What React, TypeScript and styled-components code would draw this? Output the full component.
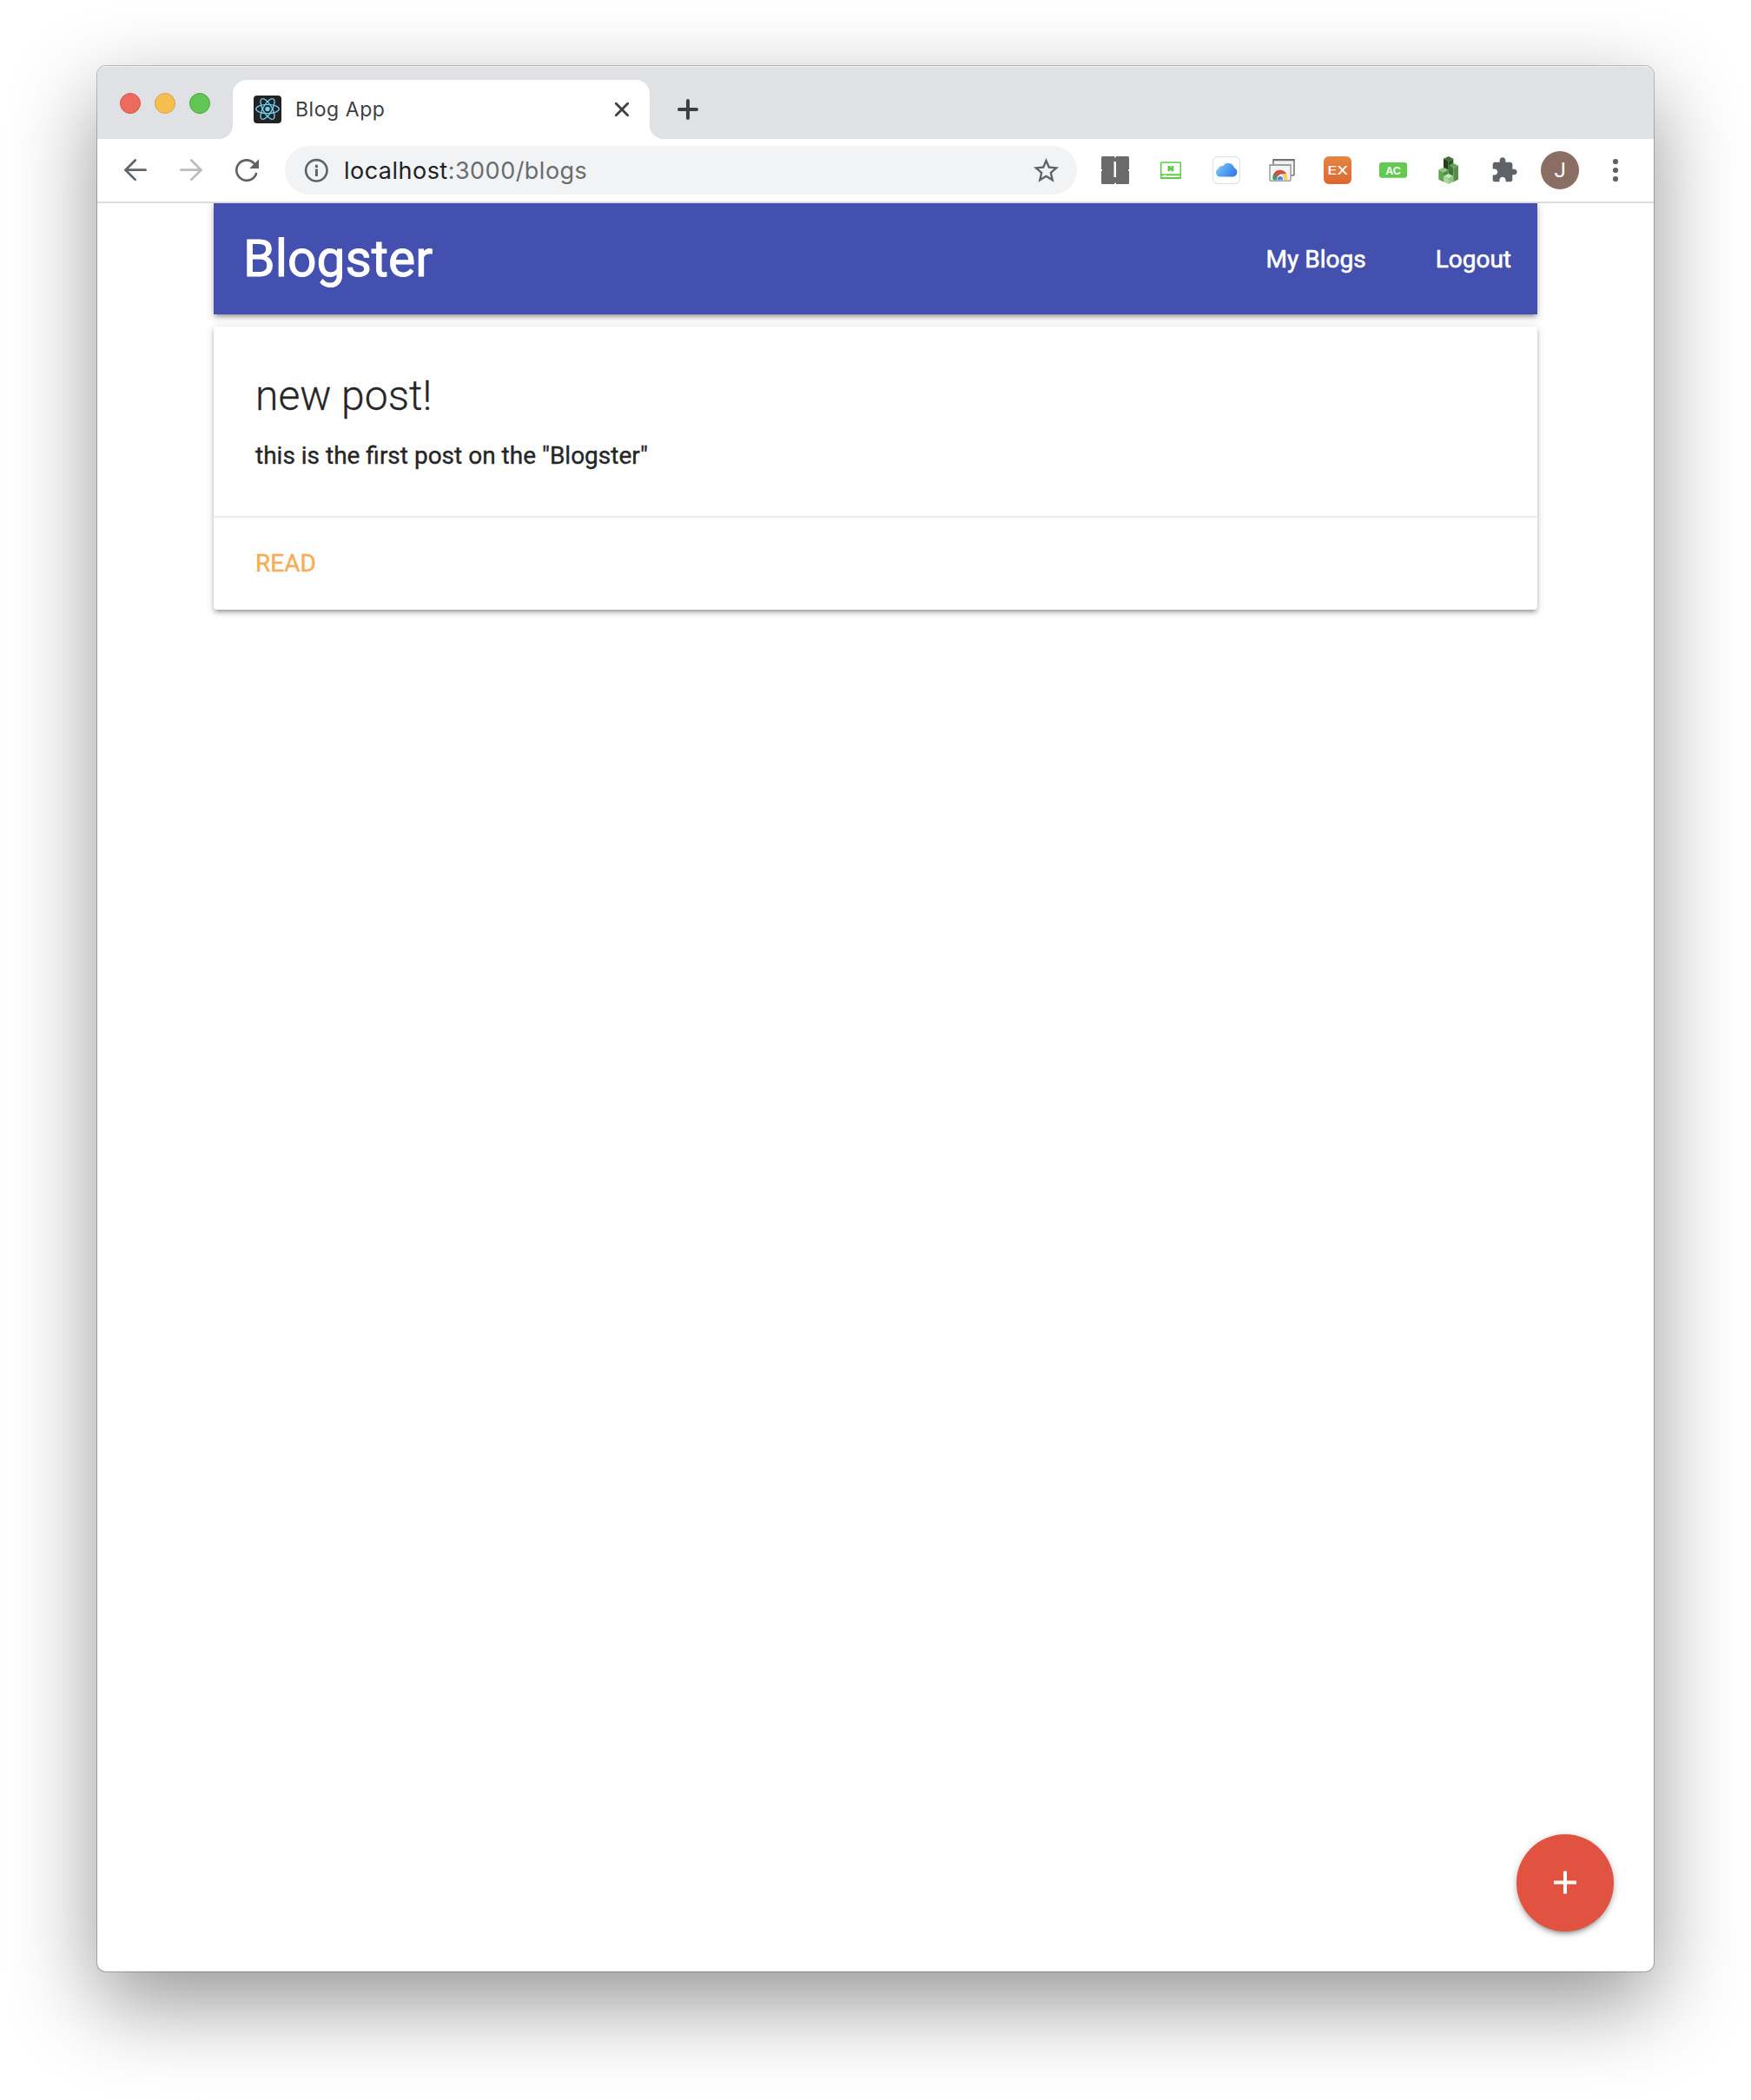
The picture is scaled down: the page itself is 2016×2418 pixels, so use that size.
import React from "react";
import styled, { createGlobalStyle } from "styled-components";

const GlobalStyle = createGlobalStyle`
  *, *::before, *::after { box-sizing: border-box; }
  body { margin: 0; background: #fff; }
`;

const uiFont = `Inter, "Liberation Sans", sans-serif`;
const pageFont = `Roboto, "Liberation Sans", sans-serif`;
const elevation = `0 4px 4px 0 rgba(0,0,0,.14), 0 6px 2px -4px rgba(0,0,0,.12), 0 2px 10px 0 rgba(0,0,0,.2)`;

const Desktop = styled.div`
  display: flex;
  width: 2016px;
  height: 2418px;
  padding: 76px 112px 148px;
  background: #fff;
  overflow: hidden;
`;

const BrowserWindow = styled.div`
  position: relative;
  display: flex;
  flex-direction: column;
  flex: 1;
  border-radius: 10px;
  background: #fff;
  box-shadow: 0 0 0 1px rgba(0,0,0,.23), 0 36px 100px rgba(0,0,0,.42);
`;

const TabStrip = styled.div`
  display: flex;
  align-items: flex-end;
  height: 84px;
  padding-left: 26px;
  border-radius: 10px 10px 0 0;
  background: #dfe1e5;
  box-shadow: inset 0 1px 0 #f0f1f3;
`;

const TrafficLights = styled.div`
  display: flex;
  gap: 16px;
  margin: 0 10px 29px 0;
`;

const Light = styled.span<{ $fill: string; $ring: string }>`
  width: 24px;
  height: 24px;
  border-radius: 50%;
  background: ${(p) => p.$fill};
  border: 1px solid ${(p) => p.$ring};
`;

const Flare = styled.span<{ $side: "left" | "right" }>`
  width: 16px;
  height: 16px;
  background: radial-gradient(
    circle at ${(p) => (p.$side === "left" ? "0 0" : "100% 0")},
    transparent 15.5px,
    #fff 16.5px
  );
`;

const Tab = styled.div`
  display: flex;
  align-items: center;
  width: 480px;
  height: 68px;
  padding: 0 16px 0 24px;
  border-radius: 16px 16px 0 0;
  background: #fff;
`;

const TabTitle = styled.span`
  flex: 1;
  margin-left: 16px;
  font: 400 23px/32px ${uiFont};
  letter-spacing: 0.55px;
  color: #3c4043;
`;

const Icon = styled.svg<{ $size?: number }>`
  display: block;
  flex: none;
  width: ${(p) => p.$size ?? 32}px;
  height: ${(p) => p.$size ?? 32}px;
  overflow: visible;
`;

const NewTab = styled.div`
  margin: 0 0 18px 12px;
`;

const Toolbar = styled.div`
  display: flex;
  align-items: center;
  height: 74px;
  padding: 0 12px;
  border-bottom: 2px solid #dadce0;
  background: #fff;
`;

const ToolButton = styled.div`
  display: flex;
  align-items: center;
  justify-content: center;
  width: 64px;
  height: 64px;
`;

const AddressBar = styled.div`
  display: flex;
  align-items: center;
  flex: 1;
  height: 56px;
  margin: 0 12px;
  padding: 0 18.5px 0 20px;
  border-radius: 28px;
  background: #f1f3f4;
`;

const Url = styled.div`
  flex: 1;
  margin-left: 16px;
  padding-top: 1px;
  font: 400 27px/36px ${uiFont};
  letter-spacing: 0.48px;
  color: #6a6c6e;
`;

const Host = styled.span`
  color: #202124;
`;

const Avatar = styled.div`
  display: flex;
  align-items: center;
  justify-content: center;
  width: 44px;
  height: 44px;
  border-radius: 50%;
  background: #8a6e63;
  color: #fff;
  font: 400 24px/44px ${pageFont};
`;

const Page = styled.main`
  flex: 1;
  width: 1524px;
  margin-left: 134px;
  font: 400 28px/42px ${pageFont};
  color: rgba(0, 0, 0, 0.87);
`;

const NavBar = styled.nav`
  display: flex;
  align-items: center;
  justify-content: space-between;
  height: 128px;
  padding: 0 30px 0 34px;
  background: #4350af;
  color: #fff;
  -webkit-text-stroke: 0.6px #fff;
  clip-path: inset(0 -20px -20px -20px);
  box-shadow: ${elevation};
`;

const Brand = styled.span`
  font-size: 58.8px;
  line-height: 128px;
  -webkit-text-stroke-width: 1px;
`;

const NavLinks = styled.div`
  display: flex;
  gap: 80px;
  padding-top: 1px;
  line-height: 127px;
`;

const Card = styled.article`
  margin-top: 14px;
  border-radius: 4px;
  background: #fff;
  box-shadow: ${elevation};
`;

const CardContent = styled.div`
  padding: 48px;
`;

const CardTitle = styled.h2`
  margin: 0 0 16px;
  font-size: 48px;
  font-weight: 300;
  line-height: 64px;
  -webkit-text-stroke: 0.3px #222;
`;

const CardText = styled.p`
  margin: 0;
  -webkit-text-stroke: 0.4px #222;
`;

const CardAction = styled.div`
  padding: 32px 48px;
  border-top: 2px solid #ececec;
  color: #f6ad55;
  text-transform: uppercase;
  -webkit-text-stroke: 0.4px #f6ad55;
`;

const FloatingButton = styled.div`
  position: absolute;
  right: 46px;
  bottom: 46px;
  display: flex;
  align-items: center;
  justify-content: center;
  width: 112px;
  height: 112px;
  border-radius: 50%;
  background: #e15241;
  box-shadow: ${elevation};
`;

const ReactFavicon = () => (
  <Icon viewBox="0 0 32 32">
    <rect width="32" height="32" rx="4" fill="#222" />
    <g fill="none" stroke="#6fd0f2" strokeWidth="1.35">
      {[0, 60, 120].map((a) => (
        <ellipse key={a} cx="16" cy="15.5" rx="13.3" ry="5.1" transform={`rotate(${a} 16 15.5)`} />
      ))}
    </g>
    <circle cx="16" cy="15.5" r="2.7" fill="#6fd0f2" />
  </Icon>
);

const BackIcon = () => (
  <Icon viewBox="0 0 32 32" fill="none" stroke="#5f6368" strokeWidth="2.7" strokeLinecap="round">
    <path d="M27.6 15.7H5M15.7 4.5L4.5 15.7L15.7 26.9" />
  </Icon>
);

const ForwardIcon = () => (
  <Icon viewBox="0 0 32 32" fill="none" stroke="#babcbe" strokeWidth="2.7" strokeLinecap="round">
    <path d="M4.4 15.7H27M16.3 4.5L27.5 15.7L16.3 26.9" />
  </Icon>
);

const ReloadIcon = () => (
  <Icon viewBox="0 0 32 32">
    <path
      d="M24.3 7.8A11.7 11.7 0 1 0 27 20"
      fill="none"
      stroke="#5f6368"
      strokeWidth="2.7"
      strokeLinecap="round"
    />
    <path d="M30 3.2V14H19.2Z" fill="#5f6368" />
  </Icon>
);

const InfoIcon = () => (
  <Icon viewBox="0 0 32 32">
    <circle cx="16.3" cy="16.3" r="12.2" fill="none" stroke="#5f6368" strokeWidth="2.6" />
    <path d="M14.9 9.8h3v3.2h-3zM14.9 14.5h3v8.6h-3z" fill="#5f6368" />
  </Icon>
);

const StarIcon = () => (
  <Icon $size={35} viewBox="0 0 24 24" fill="#5f6368">
    <path d="M22 9.24l-7.19-.62L12 2 9.19 8.63 2 9.24l5.46 4.73L5.82 21 12 17.27 18.18 21l-1.63-7.03L22 9.24zM12 15.4l-3.76 2.27 1-4.28-3.32-2.88 4.38-.38L12 6.1l1.71 4.04 4.38.38-3.32 2.88 1 4.28L12 15.4z" />
  </Icon>
);

const SquareIcon = () => (
  <Icon viewBox="0 0 32 32">
    <rect width="32" height="32" rx="1.5" fill="#6b6b6b" />
    <path d="M13.800 7.500l1.200-1.500h2V24h-2.500V7.500zM15 0h2v1.200h-2zM15 30.800h2V32h-2zM0 15h1v2H0zM31 15h1v2h-1z" fill="#fff" />
  </Icon>
);

const PlayerIcon = () => (
  <Icon viewBox="0 0 32 32">
    <rect x="4.7" y="7.1" width="22.6" height="17.8" rx=".6" fill="#fff" stroke="#5fca43" strokeWidth="1.5" />
    <path d="M4 20.3h24v2H4zM4 24h24v2H4z" fill="#5fca43" />
    <circle cx="9.3" cy="22.7" r="1.5" fill="#fff" />
    <path d="M12.500 11h2.700l1.600 2.300V11h2.500v6.200h-2.500l-1.700-2.400v2.400h-2.600z" fill="#5fca43" />
  </Icon>
);

const CloudIcon = () => (
  <Icon viewBox="0 0 32 32">
    <defs>
      <linearGradient id="cloud" x1="0" y1="0" x2="1" y2=".5">
        <stop offset="0" stopColor="#9bd9f8" />
        <stop offset=".45" stopColor="#5aaaf2" />
        <stop offset="1" stopColor="#3f7cec" />
      </linearGradient>
    </defs>
    <rect x=".6" y=".6" width="30.8" height="30.8" rx="5.5" fill="#fff" stroke="#e3e3e3" strokeWidth="1.2" />
    <path
      d="M8.200 23.500a5 5 0 0 1-1.600-9.300 4.300 4.300 0 0 1 5.600-3A7 7 0 0 1 25 13.300a5.300 5.300 0 0 1-1.200 10.200z"
      fill="url(#cloud)"
    />
  </Icon>
);

const WindowsIcon = () => (
  <Icon viewBox="0 0 32 32">
    <rect x="6" y="3.7" width="24" height="18.4" rx="1" fill="#f0f0f0" stroke="#71746e" strokeWidth="1.5" />
    <path d="M5.3 3h25.4v2.2H5.3z" fill="#71746e" />
    <rect x="2" y="9.7" width="24" height="18.6" rx="1" fill="#f5f5f5" stroke="#9c9e9b" strokeWidth="1.5" />
    <path d="M1.5 9h25v2h-25z" fill="#9c9e9b" />
    <path d="M5.9 27.2A8.3 8.3 0 0 1 7 19.2l5 5.2v2.8z" fill="#3f9b5a" />
    <path d="M6.5 20A8.3 8.3 0 0 1 21.3 20.6H14l-3.5 3z" fill="#cf4f42" />
    <path d="M21.3 20.6a8.3 8.3 0 0 1 1 6.6H15l2.5-6.6z" fill="#f7d160" />
    <path d="M10.3 27.2a3.9 3.9 0 1 1 7.3 0z" fill="#fff" />
    <path d="M11 27.2a3.15 3.15 0 1 1 5.9 0z" fill="#4a84ec" />
  </Icon>
);

const ExIcon = () => (
  <Icon viewBox="0 0 32 32">
    <defs>
      <linearGradient id="ex" x1="0" y1="0" x2="0" y2="1">
        <stop offset="0" stopColor="#e48643" />
        <stop offset="1" stopColor="#dc6833" />
      </linearGradient>
    </defs>
    <rect width="32" height="32" rx="6" fill="url(#ex)" />
    <text x="4.2" y="20.7" textLength="24" lengthAdjust="spacingAndGlyphs" fontFamily="Inter" fontWeight="500" fontSize="13" fill="#fff">
      EX
    </text>
  </Icon>
);

const AcIcon = () => (
  <Icon viewBox="0 0 32 32">
    <rect y="7" width="32" height="17.7" rx="3" fill="#62ca50" />
    <text x="7.2" y="20.5" textLength="17.6" lengthAdjust="spacingAndGlyphs" fontFamily="Inter" fontWeight="600" fontSize="12.3" fill="#fff">
      AC
    </text>
  </Icon>
);

const BlocksIcon = () => (
  <Icon viewBox="0 0 32 32">
    <path d="M15.7 0l5.6 2.8-5.6 2.7L10 2.8z" fill="#446c3e" />
    <path d="M10 2.8l5.7 2.7V17L10 14z" fill="#203f1a" />
    <path d="M21.3 2.8l-5.6 2.7V15l5.6-3z" fill="#2d5a26" />
    <path d="M21.3 8l5.7 2.7-5.7 2.8-5.6-2.8z" fill="#64a558" />
    <path d="M15.7 10.7l5.6 2.8V29.5l-5.6-2.8z" fill="#3f7536" />
    <path d="M27 10.7l-5.7 2.8V29.5l5.7-2.8z" fill="#558f4a" />
    <path d="M10 12.7l5.7 2.9L10 18.5l-5.7-2.9z" fill="#8cc97f" />
    <path d="M4.3 15.6l5.7 2.9V29.5l-5.7-2.8z" fill="#62a356" />
    <path d="M15.7 15.6L10 18.5V29.5l5.7-2.8z" fill="#4f8b44" />
    <path d="M15.7 20l5.6 2.8-5.6 2.7-5.7-2.7z" fill="#c0e9b9" />
    <path d="M10 22.8l5.7 2.7V32L10 29.2z" fill="#a6d99e" />
    <path d="M21.3 22.8l-5.6 2.7V32l5.6-2.8z" fill="#8dc785" />
  </Icon>
);

const PuzzleIcon = () => (
  <Icon viewBox="0 0 24 24" fill="#5f6368">
    <path d="M20.5 11H19V7c0-1.1-.9-2-2-2h-4V3.5C13 2.12 11.88 1 10.5 1S8 2.12 8 3.5V5H4c-1.1 0-1.99.9-1.99 2v3.8H3.5c1.49 0 2.7 1.21 2.7 2.7s-1.21 2.7-2.7 2.7H2V20c0 1.1.9 2 2 2h3.8v-1.5c0-1.49 1.21-2.7 2.7-2.7 1.49 0 2.7 1.21 2.7 2.7V22H17c1.1 0 2-.9 2-2v-4h1.5c1.38 0 2.5-1.12 2.5-2.5S21.88 11 20.5 11z" />
  </Icon>
);

const MenuIcon = () => (
  <Icon viewBox="0 0 32 32" fill="#5f6368">
    <circle cx="16" cy="6" r="3.1" />
    <circle cx="16" cy="16" r="3.1" />
    <circle cx="16" cy="26" r="3.1" />
  </Icon>
);

const navigation = [BackIcon, ForwardIcon, ReloadIcon];
const extensions = [
  SquareIcon,
  PlayerIcon,
  CloudIcon,
  WindowsIcon,
  ExIcon,
  AcIcon,
  BlocksIcon,
  PuzzleIcon,
];

export default function App() {
  return (
    <Desktop>
      <GlobalStyle />
      <BrowserWindow>
        <TabStrip>
          <TrafficLights>
            <Light $fill="#ed6a5e" $ring="#d8564b" />
            <Light $fill="#f5bf4f" $ring="#d9a33d" />
            <Light $fill="#61c654" $ring="#4aa73c" />
          </TrafficLights>
          <Flare $side="left" />
          <Tab>
            <ReactFavicon />
            <TabTitle>Blog App</TabTitle>
            <Icon viewBox="0 0 32 32" fill="none" stroke="#3c4043" strokeWidth="2.8" strokeLinecap="round">
              <path d="M9.3 9.3L22.7 22.7M22.7 9.3L9.3 22.7" />
            </Icon>
          </Tab>
          <Flare $side="right" />
          <NewTab>
            <Icon viewBox="0 0 32 32" fill="none" stroke="#3c4043" strokeWidth="4" strokeLinecap="round">
              <path d="M6 16H26M16 6V26" />
            </Icon>
          </NewTab>
        </TabStrip>
        <Toolbar>
          {navigation.map((Glyph, i) => (
            <ToolButton key={i}>
              <Glyph />
            </ToolButton>
          ))}
          <AddressBar>
            <InfoIcon />
            <Url>
              <Host>localhost</Host>:3000/blogs
            </Url>
            <StarIcon />
          </AddressBar>
          {extensions.map((Glyph, i) => (
            <ToolButton key={i}>
              <Glyph />
            </ToolButton>
          ))}
          <ToolButton>
            <Avatar>J</Avatar>
          </ToolButton>
          <ToolButton>
            <MenuIcon />
          </ToolButton>
        </Toolbar>
        <Page>
          <NavBar>
            <Brand>Blogster</Brand>
            <NavLinks>
              <span>My Blogs</span>
              <span>Logout</span>
            </NavLinks>
          </NavBar>
          <Card>
            <CardContent>
              <CardTitle>new post!</CardTitle>
              <CardText>this is the first post on the "Blogster"</CardText>
            </CardContent>
            <CardAction>Read</CardAction>
          </Card>
        </Page>
        <FloatingButton>
          <Icon viewBox="0 0 32 32" fill="none" stroke="#fff" strokeWidth="4">
            <path d="M3 15.5H29M16 2.5V28.5" />
          </Icon>
        </FloatingButton>
      </BrowserWindow>
    </Desktop>
  );
}
